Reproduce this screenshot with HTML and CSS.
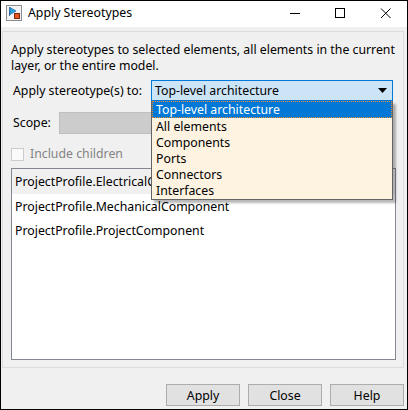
FILE: index.html
```html
<!DOCTYPE html>
<html>
<head>
<meta charset="utf-8">
<link rel="stylesheet" href="styles.css">
</head>
<body>
<div class="window">
  <div class="titlebar">
    <svg class="app-icon" width="16" height="16" viewBox="0 0 16 16">
      <rect x="0.5" y="0.5" width="15" height="15" fill="#f4f4f4" stroke="#8c8c8c"/>
      <line x1="3.5" y1="2" x2="3.5" y2="11" stroke="#3a6ea5" stroke-width="1"/>
      <polygon points="4,2.5 10,6 4,9.5" fill="#2aa6e0" stroke="#2b6fb3" stroke-width="0.8"/>
      <rect x="8.5" y="8.5" width="5" height="5" fill="#e8531f" stroke="#7a2a10"/>
    </svg>
    <span class="title">Apply Stereotypes</span>
    <div class="controls">
      <svg width="46" height="26" viewBox="0 0 46 26"><line x1="21" y1="12.5" x2="31" y2="12.5" stroke="#000" stroke-width="1"/></svg>
      <svg width="46" height="26" viewBox="0 0 46 26"><rect x="20.5" y="7.5" width="9" height="9" fill="none" stroke="#000" stroke-width="1"/></svg>
      <svg width="46" height="26" viewBox="0 0 46 26"><path d="M20 7.5 L29.5 17 M29.5 7.5 L20 17" stroke="#000" stroke-width="1"/></svg>
    </div>
  </div>
  <div class="client">
    <div class="panel">
      <p class="desc">Apply stereotypes to selected elements, all elements in the current layer, or the entire model.</p>
      <div class="row apply-row">
        <span class="label">Apply stereotype(s) to:</span>
        <div class="combo-wrap">
          <div class="combo">
            <span>Top-level architecture</span>
            <svg class="arrow" width="9" height="5" viewBox="0 0 9 5"><polygon points="0,0 9,0 4.5,5" fill="#000"/></svg>
          </div>
          <ul class="dropdown">
            <li class="selected">Top-level architecture</li>
            <li>All elements</li>
            <li>Components</li>
            <li>Ports</li>
            <li>Connectors</li>
            <li>Interfaces</li>
          </ul>
        </div>
      </div>
      <div class="row scope-row">
        <span class="label">Scope:</span>
        <div class="scope-field"></div>
      </div>
      <div class="row check-row">
        <span class="checkbox"></span>
        <span class="check-label">Include children</span>
      </div>
      <div class="listbox">
        <div class="item hover">ProjectProfile.ElectricalComponent</div>
        <div class="item">ProjectProfile.MechanicalComponent</div>
        <div class="item">ProjectProfile.ProjectComponent</div>
      </div>
    </div>
    <div class="buttons">
      <button class="btn">Apply</button>
      <button class="btn">Close</button>
      <button class="btn">Help</button>
    </div>
  </div>
</div>
</body>
</html>
```

FILE: styles.css
```css
* { box-sizing: border-box; }
html, body { margin: 0; padding: 0; background: #fff; }
body {
  font-family: "Noto Sans", "Open Sans", sans-serif;
  font-size: 12.3px;
  color: #000;
}
.window {
  width: 408px;
  height: 410px;
  border: 1px solid #000;
  background: #f0f0f0;
  display: flex;
  flex-direction: column;
}
.titlebar {
  height: 26px;
  background: #fff;
  display: flex;
  align-items: center;
  flex-shrink: 0;
}
.app-icon { margin-left: 5px; margin-top: -2px; }
.title {
  margin-left: 6px;
  font-size: 12.3px;
  line-height: 16px;
  margin-top: -2px;
}
.controls { margin-left: auto; display: flex; }
.controls svg { display: block; }
.client {
  flex: 1;
  padding: 4px 3px 0 1px;
  display: flex;
  flex-direction: column;
}
.panel {
  height: 337px;
  border: 1px solid #dcdcdc;
  padding: 10px 7px 0 7px;
  display: flex;
  flex-direction: column;
}
.desc {
  margin: 0 0 0 1px;
  line-height: 16px;
}
.row { display: flex; align-items: center; }
.label { line-height: 16px; }
.apply-row { margin-top: 6px; padding-left: 3px; }
.combo-wrap {
  position: relative;
  margin-left: auto;
  margin-right: 3px;
  width: 242px;
}
.combo {
  height: 21px;
  background: #cce4f7;
  border: 1px solid #0078d7;
  display: flex;
  align-items: center;
  padding-left: 3px;
  padding-right: 5px;
}
.combo .arrow { margin-left: auto; }
.dropdown {
  position: absolute;
  left: 0;
  top: 21px;
  width: 242px;
  margin: 0;
  padding: 0 0 1px 0;
  list-style: none;
  background: #fdf3e0;
  border: 1px solid #646464;
  border-top: none;
  box-shadow: 3px 3px 2px rgba(0,0,0,0.28);
  z-index: 5;
}
.dropdown li {
  height: 16px;
  line-height: 18px;
  padding-left: 4px;
}
.dropdown li.selected {
  background: #0078d7;
  color: #fff;
  outline: 1px dotted #f08c28;
  outline-offset: -1px;
  height: 17px;
  line-height: 17px;
}
.scope-row { margin-top: 11px; padding-left: 3px; }
.scope-field {
  margin-left: 8px;
  width: 334px;
  height: 22px;
  background: #cccccc;
  border: 1px solid #bfbfbf;
}
.check-row { margin-top: 12px; padding-left: 1px; }
.checkbox {
  width: 13px;
  height: 13px;
  border: 1px solid #cccccc;
  background: #fafafa;
}
.check-label {
  margin-left: 6px;
  color: #838383;
  line-height: 16px;
}
.listbox {
  margin-top: 6px;
  margin-left: 1px;
  width: 385px;
  height: 192px;
  background: #fff;
  border: 1px solid #828790;
}
.item {
  height: 24px;
  line-height: 26px;
  padding-left: 3px;
}
.item.hover { background: #f0f0f0; height: 25px; line-height: 26px; }
.buttons {
  display: flex;
  justify-content: flex-end;
  gap: 8px;
  margin-top: 16px;
}
.btn {
  width: 74px;
  height: 22px;
  background: #e1e1e1;
  border: 1px solid #adadad;
  font-family: inherit;
  font-size: 12.3px;
  color: #000;
  padding: 0;
}
```
